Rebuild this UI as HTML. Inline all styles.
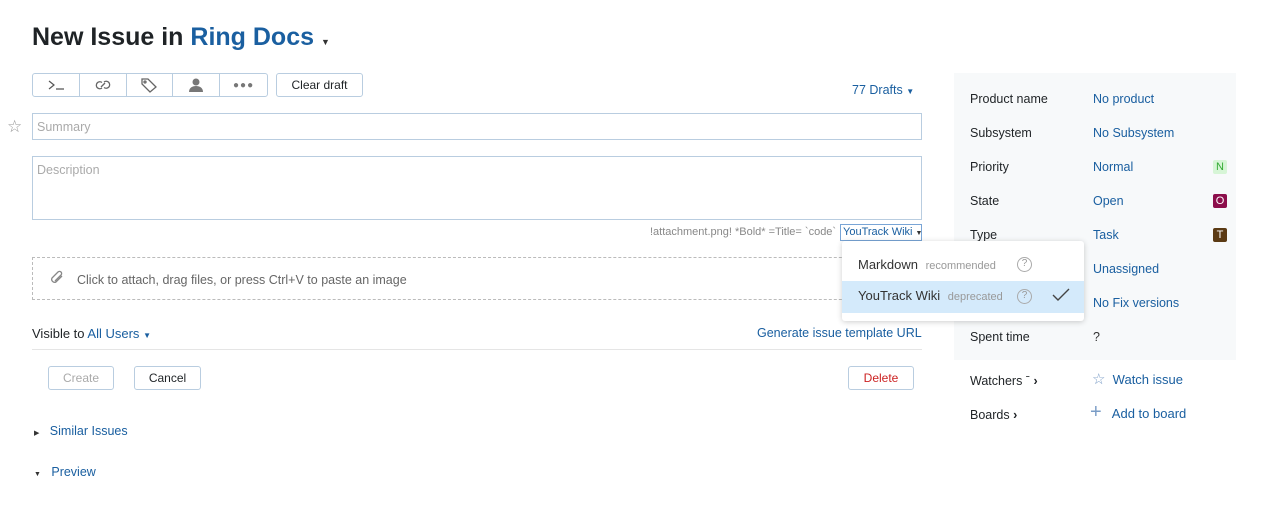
<!DOCTYPE html>
<html><head><meta charset="utf-8"><style>
*{box-sizing:border-box;margin:0;padding:0}
body{width:1268px;height:508px;background:#fff;font-family:"Liberation Sans",sans-serif;font-size:13px;color:#1f2326;position:relative;overflow:hidden}
.a{position:absolute}
.blue{color:#1a5fa0}
.btn{position:absolute;border:1px solid #b9cde0;border-radius:3px;background:#fff;height:24px;font-size:12px;display:flex;align-items:center;justify-content:center}
.lab{position:absolute;left:970px;font-size:12.5px}
.val{position:absolute;left:1093px;font-size:12.5px;color:#1a5fa0}
.tag{position:absolute;left:1213px;width:14px;height:14px;font-size:11px;text-align:center;line-height:14px;border-radius:2px}
.tb{width:47px;height:100%;border-right:1px solid #b9cde0;display:flex;align-items:center;justify-content:center}
</style></head><body>
<div class="a" style="left:32px;top:23px;font-size:25px;font-weight:bold">New Issue in <span class="blue">Ring Docs</span> <span style="font-size:9px;color:#333">▼</span></div>

<div class="btn" style="left:32px;top:73px;width:236px;justify-content:flex-start;padding:0">
<div class="tb"><svg width="18" height="12" viewBox="0 0 18 12" fill="none" stroke="#555" stroke-width="1.2"><path d="M2 2l5 4-5 4M9 10h8"/></svg></div>
<div class="tb"><svg width="18" height="14" viewBox="0 0 18 14" fill="none" stroke="#666" stroke-width="1.3"><path d="M8 4.5a3.5 3.5 0 1 0 0 5.5M10 9.5a3.5 3.5 0 1 0 0-5.5"/><path d="M7 9l4-4"/></svg></div>
<div class="tb"><svg width="18" height="16" viewBox="0 0 18 16" fill="none" stroke="#666" stroke-width="1.3"><path d="M2 2h6l8 8-6 5-8-8z"/><circle cx="5" cy="5" r="1"/></svg></div>
<div class="tb"><svg width="14" height="16" viewBox="0 0 14 16" fill="#777"><circle cx="7" cy="5" r="3.5"/><path d="M0 15c0-4 3-6 7-6s7 2 7 6z"/></svg></div>
<div class="tb" style="border:0;color:#777;font-size:10px;letter-spacing:1px">●●●</div>
</div>
<div class="btn" style="left:276px;top:73px;width:87px">Clear draft</div>
<div class="a blue" style="left:852px;top:83px;font-size:12.5px">77 Drafts <span style="font-size:8px">▼</span></div>

<div class="a" style="left:7px;top:117px;font-size:17px;color:#999">☆</div>
<div class="a" style="left:32px;top:113px;width:890px;height:27px;border:1px solid #b9cde0;padding:6px 4px;color:#aaa;font-size:12.5px">Summary</div>
<div class="a" style="left:32px;top:156px;width:890px;height:64px;border:1px solid #b9cde0;padding:6px 4px;color:#aaa;font-size:12.5px">Description</div>
<div class="a" style="left:650px;top:226px;font-size:11px;color:#888">!attachment.png! *Bold* =Title= `code`</div>
<div class="a" style="left:840px;top:224px;width:82px;height:17px;border:1px solid #79a5d6;font-size:11px;color:#1a5fa0;padding:1px 2px;white-space:nowrap">YouTrack Wiki <span style="font-size:7px;color:#333">▼</span></div>
<div class="a" style="left:32px;top:257px;width:890px;height:43px;border:1px dashed #bbb;padding:15px 44px;font-size:12.5px;color:#666">Click to attach, drag files, or press Ctrl+V to paste an image</div>
<svg class="a" style="left:49px;top:270px" width="16" height="14" viewBox="0 0 16 14" fill="none" stroke="#888" stroke-width="1.3"><path d="M13 6L7 12a3 3 0 0 1-4-4l6-6a2 2 0 0 1 3 3L6 11"/></svg>

<div class="a" style="left:32px;top:326px;font-size:13px">Visible to <span class="blue">All Users</span> <span class="blue" style="font-size:8px">▼</span></div>
<div class="a blue" style="left:757px;top:326px;font-size:12.5px">Generate issue template URL</div>
<div class="a" style="left:32px;top:349px;width:890px;height:1px;background:#e5e5e5"></div>
<div class="btn" style="left:48px;top:366px;width:66px;color:#aaa">Create</div>
<div class="btn" style="left:134px;top:366px;width:67px">Cancel</div>
<div class="btn" style="left:848px;top:366px;width:66px;color:#c22">Delete</div>
<div class="a blue" style="left:34px;top:424px;font-size:12.5px"><span style="font-size:7px;color:#333">▶</span>&nbsp;&nbsp; Similar Issues</div>
<div class="a blue" style="left:34px;top:465px;font-size:12.5px"><span style="font-size:7px;color:#333">▼</span>&nbsp;&nbsp; Preview</div>

<div class="a" style="left:954px;top:73px;width:282px;height:287px;background:#f7f9fa"></div>
<div class="lab" style="top:92px">Product name</div><div class="val" style="top:92px">No product</div>
<div class="lab" style="top:126px">Subsystem</div><div class="val" style="top:126px">No Subsystem</div>
<div class="lab" style="top:160px">Priority</div><div class="val" style="top:160px">Normal</div><div class="tag" style="top:160px;background:#d6f5d6;color:#3a3">N</div>
<div class="lab" style="top:194px">State</div><div class="val" style="top:194px">Open</div><div class="tag" style="top:194px;background:#8c0e4b;color:#fff">O</div>
<div class="lab" style="top:228px">Type</div><div class="val" style="top:228px">Task</div><div class="tag" style="top:228px;background:#5b3a14;color:#fff">T</div>
<div class="val" style="top:262px">Unassigned</div>
<div class="val" style="top:296px">No Fix versions</div>
<div class="lab" style="top:330px">Spent time</div><div class="val" style="top:330px;color:#333">?</div>
<div class="lab" style="top:374px">Watchers ˉ <b>›</b></div>
<div class="a blue" style="left:1092px;top:370px;font-size:13px"><span style="color:#7a9cc6;font-size:15px">☆</span>&nbsp; Watch issue</div>
<div class="lab" style="top:408px">Boards <b>›</b></div>
<div class="a blue" style="left:1090px;top:405px;font-size:13px"><span style="color:#7a9cc6;font-size:20px;line-height:14px">+</span>&nbsp;&nbsp; Add to board</div>

<div class="a" style="left:842px;top:241px;width:242px;height:80px;background:#fff;border-radius:3px;box-shadow:0 1px 6px rgba(0,0,0,.2)">
<div class="a" style="left:0;top:0;width:242px;height:40px;padding:16px 16px;font-size:13px;color:#333">Markdown <span style="font-size:11px;color:#999;margin-left:4px">recommended</span></div>
<div class="a" style="left:0;top:40px;width:242px;height:32px;background:#d4eafb;padding:7px 16px;font-size:13px;color:#333">YouTrack Wiki <span style="font-size:11px;color:#999;margin-left:4px">deprecated</span></div>
<div class="a" style="left:175px;top:16px;width:15px;height:15px;border:1.5px solid #aaa;border-radius:50%;font-size:10px;color:#999;text-align:center;line-height:12px">?</div>
<div class="a" style="left:175px;top:48px;width:15px;height:15px;border:1.5px solid #aaa;border-radius:50%;font-size:10px;color:#999;text-align:center;line-height:12px">?</div>
<svg class="a" style="left:210px;top:47px" width="18" height="14" viewBox="0 0 18 14" fill="none" stroke="#444" stroke-width="1.4"><path d="M1 7l5 5L17 1"/></svg>
</div>
</body></html>
